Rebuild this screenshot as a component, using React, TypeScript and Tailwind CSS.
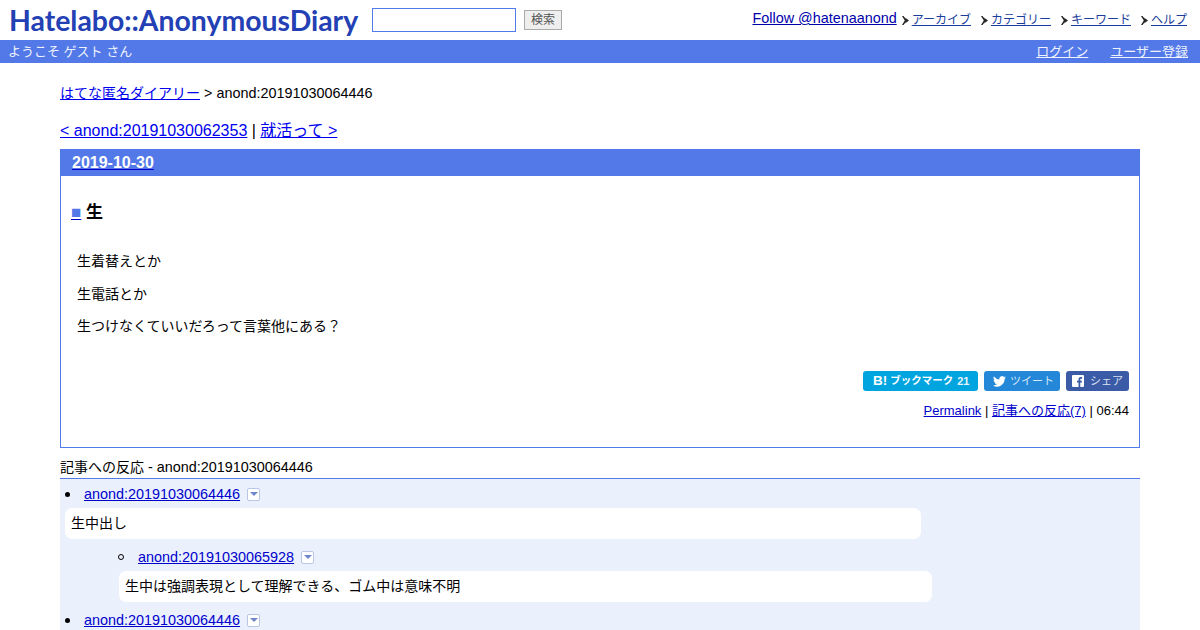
import React from "react";

function Arrow() {
  return (
    <svg width="7" height="11" viewBox="0 0 7 11" className="mr-[3px] shrink-0">
      <path d="M0 1h1.500L5 5.500 1.500 10H0l2.800-4.500z" fill="#222" />
      <path d="M3 2.500l4 3-4 3L4.500 5.500z" fill="#222" />
    </svg>
  );
}

function NavItem({ label, className }: { label: string; className: string }) {
  return (
    <span className={"flex items-center " + className}>
      <Arrow />
      <a href="#" className="text-[12px] leading-[14px] text-[#1a3d9c] underline">
        {label}
      </a>
    </span>
  );
}

function Dropdown() {
  return (
    <span className="ml-[7px] inline-flex h-[13px] w-[13px] items-center justify-center rounded-[2px] border border-[#b9c6e6] bg-white">
      <svg width="8" height="4" viewBox="0 0 8 4">
        <path d="M0 0h8L4 4z" fill="#6f86c8" />
      </svg>
    </span>
  );
}

function Reply({ id, marker }: { id: string; marker: "disc" | "circle" }) {
  return (
    <div className="flex h-[18px] items-center">
      {marker === "disc" ? (
        <span className="ml-[5px] mr-[14px] h-[5px] w-[5px] rounded-full bg-black" />
      ) : (
        <span className="ml-[4px] mr-[14px] h-[6px] w-[6px] rounded-full border border-black" />
      )}
      <a href="#" className="text-[14.4px] leading-[18px] text-[#0000cc] underline">
        {id}
      </a>
      <Dropdown />
    </div>
  );
}

export default function App() {
  return (
    <div className="h-[630px] w-[1200px] overflow-hidden bg-white font-['Liberation_Sans','Noto_Sans_CJK_JP',sans-serif] text-black">
      <header className="flex h-[40px] items-start">
        <a
          href="#"
          className="ml-[9px] mt-[2px] w-[349px] whitespace-nowrap font-['Lato',sans-serif] text-[28.4px] font-bold leading-[36px] text-[#2340b4]"
        >
          Hatelabo::AnonymousDiary
        </a>
        <input
          aria-label="検索語"
          className="ml-[14px] mt-[8px] h-[24px] w-[144px] border border-[#5279e7] bg-white"
        />
        <button className="ml-[8px] mt-[10px] h-[20px] w-[38px] border border-[#aaaaaa] bg-[#eeeeee] text-[12px] leading-[18px] text-[#555555]">
          検索
        </button>
        <nav className="ml-auto mr-[13px] mt-[9px] flex h-[20px] items-center">
          <a href="#" className="mr-[5px] -translate-y-[1px] text-[14.4px] leading-[16px] text-[#0000aa] underline">
            Follow @hatenaanond
          </a>
          <NavItem label="アーカイブ" className="mr-[10px] translate-y-[1px]" />
          <NavItem label="カテゴリー" className="mr-[10px] translate-y-[1px]" />
          <NavItem label="キーワード" className="mr-[10px] translate-y-[1px]" />
          <NavItem label="ヘルプ" className="translate-y-[1px]" />
        </nav>
      </header>

      <div className="flex h-[23px] items-center justify-between bg-[#5279e7] pl-[8px] pr-[12px] text-[13px] leading-[23px] text-[#eef2fd]">
        <span>ようこそ ゲスト さん</span>
        <span className="flex gap-[22px]">
          <a href="#" className="underline">ログイン</a>
          <a href="#" className="underline">ユーザー登録</a>
        </span>
      </div>

      <main className="mx-[60px] w-[1080px]">
        <div className="mt-[21px] h-[18px] text-[14.4px] leading-[18px]">
          <a href="#" className="text-[14px] text-[#0000ee] underline">はてな匿名ダイアリー</a>
          {" > anond:20191030064446"}
        </div>
        <div className="mt-[18px] h-[21px] text-[16px] leading-[21px]">
          <a href="#" className="text-[#0000ee] underline">{"< anond:20191030062353"}</a>
          {" | "}
          <a href="#" className="text-[#0000ee] underline">{"就活って >"}</a>
        </div>

        <article className="mt-[8px] h-[299px] border border-[#5279e7]">
          <h2 className="h-[26px] bg-[#5279e7] pl-[11px] text-[16px] font-bold leading-[26px] text-white">
            <a href="#" className="underline decoration-[#0000cc]">2019-10-30</a>
          </h2>
          <h3 className="ml-[10px] mt-[27px] h-[20px] text-[17px] font-bold leading-[20px]">
            <a href="#" className="text-[#5279e7] underline decoration-[#0000cc]">■</a> 生
          </h3>
          <div className="ml-[16px] mt-[29px] flex flex-col gap-[14.500px] text-[14px] leading-[18px]">
            <p>生着替えとか</p>
            <p>生電話とか</p>
            <p>生つけなくていいだろって言葉他にある？</p>
          </div>
          <div className="mr-[10px] mt-[36px] flex h-[20px] justify-end gap-[6px] text-[11px] text-white">
            <a href="#" className="flex w-[115px] items-center rounded-[3px] bg-[#00a4de] pl-[10px] font-bold">
              <span className="text-[13.500px] leading-[20px]">B!</span>
              <span className="ml-[3px] text-[10.500px]">ブックマーク</span>
              <span className="ml-[4px] text-[#e4f5fb]">21</span>
            </a>
            <a href="#" className="flex w-[76px] items-center rounded-[3px] bg-[#2487d7] pl-[9px]">
              <svg width="13" height="11" viewBox="0 0 24 20" className="mr-[4px]">
                <path
                  fill="#fff"
                  d="M24 2.400a9.800 9.800 0 0 1-2.800.8A4.900 4.900 0 0 0 23.300.5a9.800 9.800 0 0 1-3.100 1.200 4.900 4.900 0 0 0-8.400 4.500A14 14 0 0 1 1.700.9a4.900 4.900 0 0 0 1.500 6.600 4.900 4.900 0 0 1-2.200-.6v.1a4.900 4.900 0 0 0 3.900 4.800 4.900 4.900 0 0 1-2.200.1 4.900 4.900 0 0 0 4.600 3.400A9.900 9.900 0 0 1 0 17.300a14 14 0 0 0 7.500 2.200c9.100 0 14-7.500 14-14v-.6A10 10 0 0 0 24 2.400z"
                />
              </svg>
              <span className="text-[#d5e8f8]">ツイート</span>
            </a>
            <a href="#" className="flex w-[63px] items-center justify-center rounded-[3px] bg-[#3b5ba6]">
              <svg width="12" height="12" viewBox="0 0 12 12" className="mr-[6px]">
                <path
                  fill="#fff"
                  fillRule="evenodd"
                  d="M1 0h10a1 1 0 0 1 1 1v10a1 1 0 0 1-1 1H8.300V7.500h1.500l.2-1.800H8.300V4.600c0-.5.200-.9.900-.9h.9V2.100C9.900 2.100 9.400 2 8.800 2 7.500 2 6.500 2.800 6.500 4.400v1.300H5v1.800h1.500V12H1a1 1 0 0 1-1-1V1a1 1 0 0 1 1-1z"
                />
              </svg>
              <span className="text-[#d8e0f2]">シェア</span>
            </a>
          </div>
          <div className="mr-[10px] mt-[12px] text-right text-[13px] leading-[16px]">
            <a href="#" className="text-[#0000cc] underline">Permalink</a>
            {" | "}
            <a href="#" className="text-[#0000cc] underline">記事への反応(7)</a>
            {" | 06:44"}
          </div>
        </article>

        <section className="mt-[10px]">
          <h4 className="h-[21px] border-b border-[#5279e7] text-[14.4px] font-normal leading-[18px]">
            <span className="text-[14px]">記事への反応</span> - anond:20191030064446
          </h4>
          <div className="h-[200px] bg-[#eaf0fc] pt-[6px]">
            <Reply id="anond:20191030064446" marker="disc" />
            <div className="ml-[5px] mt-[5px] flex h-[31px] w-[856px] items-center rounded-[7px] bg-white pl-[6px] text-[14px]">
              生中出し
            </div>
            <div className="ml-[54px] mt-[9px]">
              <Reply id="anond:20191030065928" marker="circle" />
              <div className="ml-[5px] mt-[5px] flex h-[31px] w-[813px] items-center rounded-[7px] bg-white pl-[6px] text-[14px]">
                生中は強調表現として理解できる、ゴム中は意味不明
              </div>
            </div>
            <div className="mt-[9px]">
              <Reply id="anond:20191030064446" marker="disc" />
            </div>
          </div>
        </section>
      </main>
    </div>
  );
}
